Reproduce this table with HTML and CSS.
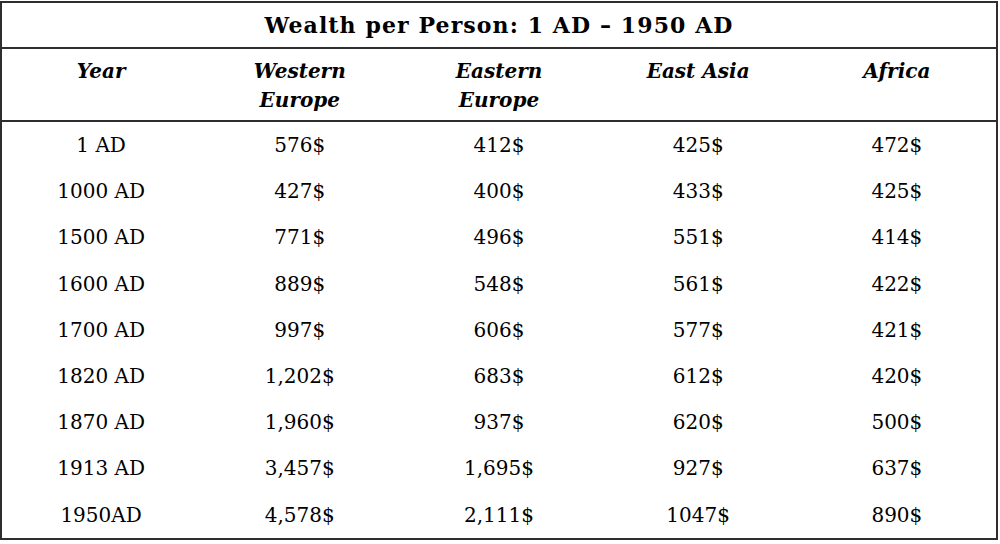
FILE: index.html
```html
<!DOCTYPE html>
<html>
<head>
<meta charset="utf-8">
<link rel="stylesheet" href="styles.css">
</head>
<body>
<table class="wealth">
  <thead>
    <tr class="title-row"><th colspan="5">Wealth per Person: 1 AD – 1950 AD</th></tr>
    <tr class="head-row">
      <th>Year</th>
      <th>Western<br>Europe</th>
      <th>Eastern<br>Europe</th>
      <th>East Asia</th>
      <th>Africa</th>
    </tr>
  </thead>
  <tbody>
    <tr><td>1 AD</td><td>576$</td><td>412$</td><td>425$</td><td>472$</td></tr>
    <tr><td>1000 AD</td><td>427$</td><td>400$</td><td>433$</td><td>425$</td></tr>
    <tr><td>1500 AD</td><td>771$</td><td>496$</td><td>551$</td><td>414$</td></tr>
    <tr><td>1600 AD</td><td>889$</td><td>548$</td><td>561$</td><td>422$</td></tr>
    <tr><td>1700 AD</td><td>997$</td><td>606$</td><td>577$</td><td>421$</td></tr>
    <tr><td>1820 AD</td><td>1,202$</td><td>683$</td><td>612$</td><td>420$</td></tr>
    <tr><td>1870 AD</td><td>1,960$</td><td>937$</td><td>620$</td><td>500$</td></tr>
    <tr><td>1913 AD</td><td>3,457$</td><td>1,695$</td><td>927$</td><td>637$</td></tr>
    <tr><td>1950AD</td><td>4,578$</td><td>2,111$</td><td>1047$</td><td>890$</td></tr>
  </tbody>
</table>
</body>
</html>
```

FILE: styles.css
```css
html, body {
  margin: 0;
  padding: 0;
  background: #ffffff;
}
body {
  padding-top: 1px;
  font-family: "DejaVu Serif", "Liberation Serif", serif;
  color: #000;
}
.wealth {
  width: 998px;
  border-collapse: collapse;
  table-layout: fixed;
  border: 2px solid #2e2e2e;
}
.title-row th {
  height: 44px;
  padding: 0;
  font-size: 22px;
  letter-spacing: 1.1px;
  font-weight: bold;
  text-align: center;
  vertical-align: middle;
  border-bottom: 2px solid #2e2e2e;
}
.head-row th {
  height: 63px;
  padding: 8px 0 0 0;
  font-size: 20px;
  font-weight: bold;
  font-style: italic;
  line-height: 29px;
  text-align: center;
  vertical-align: top;
  border-bottom: 2px solid #2e2e2e;
}
.wealth td {
  height: 46.2px;
  padding: 0;
  font-size: 20px;
  text-align: center;
  vertical-align: middle;
}
```
